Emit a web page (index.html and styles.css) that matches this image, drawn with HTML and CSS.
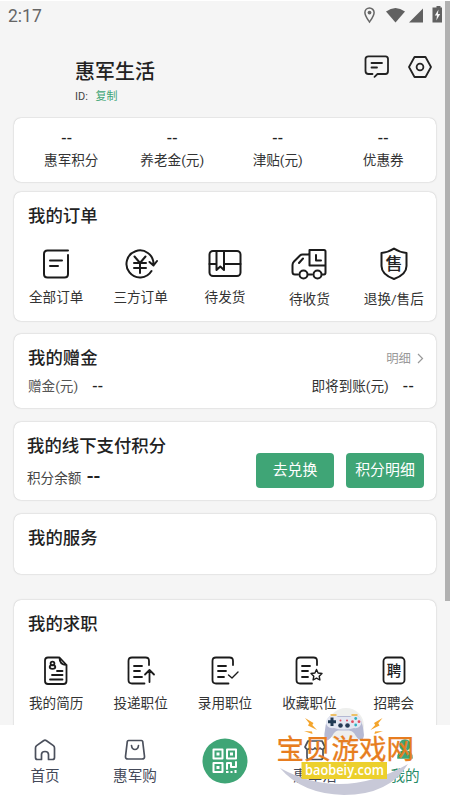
FILE: index.html
```html
<!DOCTYPE html>
<html lang="zh-CN">
<head>
<meta charset="utf-8">
<title>惠军生活</title>
<link rel="stylesheet" href="styles.css">
</head>
<body>
<div class="app">
  <header class="status">
    <span class="time">2:17</span>
    <svg class="status-icons" width="82" height="20" viewBox="0 0 82 20">
      <path d="M5.5 17C3 13.5.9 11 .9 7.6a4.6 4.6 0 0 1 9.200 0C10.100 11 8 13.500 5.500 17z" fill="none" stroke="#666" stroke-width="1.500"/>
      <circle cx="5.500" cy="7.600" r="1.900" fill="#666"/>
      <path d="M22 6.500Q31.500-.5 41 6.500L31.500 17.500z" fill="#616161"/>
      <path d="M59 3.500V17.500H45z" fill="#616161"/>
      <path d="M71 2.500h1.500v-1.500h4v1.500H78v15H68.500v-15z" fill="#616161"/>
      <path d="M74.500 4.500l-3.700 6h2.200l-.7 5 3.900-6.500h-2.300z" fill="#f5f5f5"/>
    </svg>
  </header>

  <section class="profile">
    <div>
      <h1>惠军生活</h1>
      <p class="uid">ID: <a>复制</a></p>
    </div>
    <div class="tools">
      <svg width="26" height="26" viewBox="0 0 26 26" fill="none" stroke="#222" stroke-width="1.800" stroke-linecap="round" stroke-linejoin="round"><path d="M8.500 20H4.500Q1.500 20 1.500 17V5Q1.500 2.300 4.500 2.300H21.500Q24 2.300 24 5V17Q24 20 21.500 20H13.500L10.500 22.800M7.500 9H18M7.500 13.500H13"/></svg>
      <svg width="26" height="26" viewBox="0 0 26 26" fill="none" stroke="#222" stroke-width="1.800" stroke-linejoin="round"><path d="M7.500 3H18.500L24 13L18.500 23H7.500L2 13z"/><circle cx="13" cy="13" r="3.400"/></svg>
    </div>
  </section>

  <main>
    <section class="card balances">
      <div class="stat first"><b>--</b><span>惠军积分</span></div>
      <div class="stat"><b>--</b><span>养老金(元)</span></div>
      <div class="stat"><b>--</b><span>津贴(元)</span></div>
      <div class="stat"><b>--</b><span>优惠券</span></div>
    </section>

    <section class="card orders">
      <h2>我的订单</h2>
      <div class="grid">
        <div class="item">
          <svg width="36" height="36" viewBox="0 0 36 36"><path d="M30 4.500H9.500Q6 4.500 6 8V28Q6 31.500 9.500 31.500H26.500Q30 31.500 30 28V9M12 14.500H24M12 20H20"/></svg>
          <span>全部订单</span>
        </div>
        <div class="item">
          <svg width="36" height="36" viewBox="0 0 36 36"><path d="M28.500 25A13.500 13.500 0 1 1 30.500 18M26.500 16L30.500 19.500L34 15M11.500 10.500L17 17L22.500 10.500M11 17H23M11 22H23M17 17V27"/></svg>
          <span>三方订单</span>
        </div>
        <div class="item">
          <svg width="36" height="36" viewBox="0 0 36 36"><rect x="2.500" y="5" width="31" height="25" rx="3.500"/><path d="M2.500 18H9.500M17 18H33.500M9.500 5V24L13.300 20.500L17 24V5"/></svg>
          <span>待发货</span>
        </div>
        <div class="item low">
          <svg width="36" height="36" viewBox="0 0 36 36"><path d="M17.500 8.500H11.500Q10 8.500 9 9.500L3 15.500Q1.500 17 1.500 19V26Q1.500 28.500 4 28.500H7M17.500 28.500H21M31 28.500H33Q34.500 28.500 34.500 26.500V5.500Q34.500 4 33 4H18.500V19.500H34.500M8 17L12 12.500M25 9V14.500H30"/><circle cx="12.500" cy="28.500" r="4"/><circle cx="26.500" cy="28.500" r="4"/></svg>
          <span>待收货</span>
        </div>
        <div class="item low">
          <svg width="36" height="36" viewBox="0 0 36 36"><path d="M18 2.500Q23 6 30.500 7V20Q30.500 28.500 18 33Q5.500 28.500 5.500 20V7Q13 6 18 2.500z"/><text x="18" y="24" font-size="17">售</text></svg>
          <span>退换/售后</span>
        </div>
      </div>
    </section>

    <section class="card bonus">
      <div class="row"><h2>我的赠金</h2><span class="more">明细 <svg width="7" height="11" viewBox="0 0 7 11"><path d="M1 1L5.500 5.500L1 10" fill="none" stroke="#999" stroke-width="1.200"/></svg></span></div>
      <div class="row detail"><span class="pale">赠金(元)<b>--</b></span><span class="due">即将到账(元)<b>--</b></span></div>
    </section>

    <section class="card offline">
      <div class="info"><h2>我的线下支付积分</h2><p>积分余额 <b>--</b></p></div>
      <div class="actions"><button>去兑换</button><button>积分明细</button></div>
    </section>

    <section class="card services"><h2>我的服务</h2></section>

    <section class="card jobs">
      <h2>我的求职</h2>
      <div class="grid">
        <div class="item">
          <svg width="36" height="36" viewBox="0 0 36 36"><path d="M20.500 4.500H10Q7 4.500 7 7.500V28Q7 31 10 31H25.500Q28.500 31 28.500 28V12L21.500 4.500Q21.500 12 28.500 12M19 18H24.500M14 22H24.500M12 26.500H24.500"/><circle cx="14.500" cy="10.500" r="1.900"/><ellipse cx="14.500" cy="14" rx="2.800" ry="1.800"/></svg>
          <span>我的简历</span>
        </div>
        <div class="item">
          <svg width="36" height="36" viewBox="0 0 36 36"><path d="M26 12V8Q26 4.500 22.500 4.500H9Q5.500 4.500 5.500 8V27Q5.500 30.500 9 30.500H21.500M11 13H19M11 18H17M11 24H19M26.500 29V17.500M22 21.500L26.500 17L31 21.500"/></svg>
          <span>投递职位</span>
        </div>
        <div class="item">
          <svg width="36" height="36" viewBox="0 0 36 36"><path d="M26 12V8Q26 4.500 22.500 4.500H9Q5.500 4.500 5.500 8V27Q5.500 30.500 9 30.500H21.500M11 13H19M11 18H19M11 24H17"/><path class="thin" d="M21.500 22L25 25L31 19"/></svg>
          <span>录用职位</span>
        </div>
        <div class="item">
          <svg width="36" height="36" viewBox="0 0 36 36"><path d="M26 12V8Q26 4.500 22.500 4.500H9Q5.500 4.500 5.500 8V27Q5.500 30.500 9 30.500H21M11 13H19M11 18H17M11 24H17"/><path class="thin" d="M25.500 16.500L27.100 20L31 20.500L28.200 23.200L28.900 27L25.500 25.200L22.100 27L22.800 23.200L20 20.500L23.900 20z"/></svg>
          <span>收藏职位</span>
        </div>
        <div class="item">
          <svg width="36" height="36" viewBox="0 0 36 36"><rect x="7.500" y="4.500" width="21" height="26" rx="3.500"/><text x="18" y="23" font-size="14.500">聘</text></svg>
          <span>招聘会</span>
        </div>
      </div>
    </section>
  </main>

  <nav>
    <div class="tab"><svg width="24" height="24" viewBox="0 0 24 24"><path d="M8.500 21.500H4.500Q2.500 21.500 2.500 19.500V10Q2.500 8.500 3.600 7.600L10.500 2.700Q12 1.700 13.500 2.700L20.400 7.600Q21.500 8.500 21.500 10V19.500Q21.500 21.500 19.500 21.500H15.500V16.500Q15.500 13.500 12 13.500Q8.500 13.500 8.500 16.500z"/></svg><span>首页</span></div>
    <div class="tab"><svg width="24" height="24" viewBox="0 0 24 24"><path d="M5.500 2.500H18.500Q19.500 2.500 19.700 3.500L21.500 18.500Q21.700 21 19 21H5Q2.300 21 2.500 18.500L4.300 3.500Q4.500 2.500 5.500 2.500M8.500 7.500Q9 11.500 12 11.500T15.500 7.500"/></svg><span>惠军购</span></div>
    <div class="tab scan">
      <svg width="46" height="46" viewBox="0 0 46 46"><circle cx="23" cy="23" r="22.500" fill="#3fa576"/><g fill="none" stroke="#fff" stroke-width="2"><rect x="11.500" y="11.500" width="9" height="9"/><rect x="25" y="11.500" width="9" height="9"/><rect x="11.500" y="25" width="9" height="9"/><path d="M25 31V25H29V29H34V24"/></g><path d="M14.500 14.500h3v3h-3zM28 14.500h3v3h-3zM14.500 28h3v3h-3zM24 33h2.500v2H24zM28.500 33h2v2h-2zM32.500 32h2v3h-2z" fill="#fff"/></svg>
    </div>
    <div class="tab"><svg width="24" height="24" viewBox="0 0 24 24"><path d="M4 11V19Q4 21.500 6.500 21.500H17.500Q20 21.500 20 19V11M5 3H19L22 9Q20 13 17 10Q14.500 13 12 10Q9.500 13 7 10Q4 13 2 9z"/></svg><span>惠军活</span></div>
    <div class="tab active"><svg width="24" height="24" viewBox="0 0 24 24"><circle cx="12" cy="7" r="5"/><path d="M5 20Q5 13 12 13T19 20z"/></svg><span>我的</span></div>
  </nav>

  <svg class="watermark" width="150" height="98" viewBox="270 702 150 98">
    <circle cx="346" cy="726" r="18" fill="#eeefed"/>
    <path d="M280 768Q342 802 408 764Q389 795 344 795Q302 794 280 768z" fill="#c8c9d8"/>
    <g fill="#f4a52d"><path d="M305 718l8.500 5-1.200 2 4.700 5-9-4.500 1.200-2.200zM304 731l8 .5.5 2.500zM382.500 718l-8.500 5 1.200 2-4.700 5 9-4.500-1.200-2.200zM383 731l-8 .5-.5 2.500z"/></g>
    <path d="M330 716H358Q362 719 363.500 731Q365 739 361 740.500Q358 740 354 733Q352 730.500 349 730.500H338Q336 730.500 334 733Q330 740 327 740.500Q323 739 325 730Q326 719 330 716z" fill="#b5b9d3"/>
    <path d="M332 715.500Q336 714.500 338 717H350Q353 714.500 356 715.500Q362 717 361.500 723Q360 729 354 728Q344 731 334 728Q327 729 326 723Q326 717 332 715.500z" fill="#e4e7f2"/>
    <path d="M330.500 715h6M351.500 715h6" stroke="#edb13b" stroke-width="1.500"/>
    <path d="M332 717.500V726M328 721.700H336" stroke="#203a54" stroke-width="3"/>
    <circle cx="340.500" cy="725.500" r="2.300" fill="#263a55"/><circle cx="347.500" cy="725.500" r="2.300" fill="#263a55"/>
    <g fill="#e34b5e"><circle cx="340.500" cy="720.500" r="1"/><circle cx="347" cy="720.500" r="1"/><circle cx="352.500" cy="721.700" r="1.400"/><circle cx="359" cy="721.700" r="1.400"/></g><g fill="#30afc0"><circle cx="355.700" cy="718.500" r="1.400"/><circle cx="355.700" cy="725" r="1.400"/></g>
    <text class="brand" x="276.500" y="758.500">宝贝游戏网</text>
    <rect x="301.500" y="762" width="85.500" height="17" fill="#ecd02d"/>
    <text class="domain" x="305" y="774.500" textLength="79" lengthAdjust="spacingAndGlyphs">baobeiy.com</text>
  </svg>
  <div class="scrollbar"></div>
</div>
</body>
</html>
```
FILE: styles.css
```css
* { box-sizing: border-box; }
body { margin: 0; font-family: Roboto, "Noto Sans CJK SC", sans-serif; color: #222; }
h1, h2, p { margin: 0; }
.app { position: relative; width: 450px; height: 800px; overflow: hidden; display: flex; flex-direction: column; background: #f5f5f5; border-top: 1px solid #fff; }
.status { height: 31px; flex: none; padding: 4px 4px 0 8px; display: flex; justify-content: space-between; }
.time { font-size: 17.5px; line-height: 22px; color: #666; }
.profile { height: 85px; flex: none; padding: 22px 17px 0 75px; display: flex; justify-content: space-between; }
h1 { font-size: 20px; line-height: 34px; font-weight: 500; margin-top: 1px; }
.uid { font-size: 11px; line-height: 14px; color: #444; margin-top: 1px; }
.uid a { color: #3fa576; margin-left: 5px; }
.tools { display: flex; gap: 17px; }
main { flex: 1; min-height: 0; overflow: hidden; padding: 0 14px; display: flex; flex-direction: column; }
.card { flex: none; background: #fff; border-radius: 7px; box-shadow: 0 0 1.5px rgba(0,0,0,.3); }
h2 { font-size: 17.4px; line-height: 26px; font-weight: 500; }
.balances { height: 64px; margin-top: 1px; display: grid; grid-template-columns: repeat(4, 1fr); padding-top: 9px; }
.stat { display: flex; flex-direction: column; align-items: center; font-size: 13.6px; line-height: 22px; color: #333; }
.stat b, .detail b { font-size: 15.5px; font-weight: 500; color: #222; letter-spacing: .3px; }
.stat.first span { padding-left: 9px; }
.orders { height: 129px; margin-top: 10px; padding-top: 11px; }
.orders h2, .jobs h2, .services h2 { padding-left: 14px; }
.grid { display: grid; grid-template-columns: repeat(5, 1fr); }
.item { display: flex; flex-direction: column; align-items: center; font-size: 13.6px; line-height: 20px; color: #333; }
.item svg { fill: none; stroke: #1b1b1b; stroke-width: 2; stroke-linecap: round; stroke-linejoin: round; }
.item svg text { fill: #222; stroke: none; text-anchor: middle; font-weight: 500; }
.orders .grid { margin-top: 17px; }
.orders .item span { margin-top: 5px; }
.orders .low span { margin-top: 7px; }
.bonus { height: 74px; margin-top: 13px; padding: 11px 12px 0 14px; }
.row { display: flex; justify-content: space-between; align-items: center; }
.more { font-size: 12.4px; color: #999; display: flex; align-items: center; gap: 6px; }
.detail { height: 22px; margin-top: 4px; padding-right: 10px; font-size: 13.6px; line-height: 22px; color: #333; }
.detail b { margin-left: 14px; }
.detail .pale { color: #555; }
.offline { height: 78px; margin-top: 14px; padding: 11px 12px 0 13px; display: flex; justify-content: space-between; }
.offline p { margin-top: 4px; font-size: 13.6px; line-height: 26px; color: #444; }
.offline p b { font-size: 20px; font-weight: 500; color: #222; margin-left: 2px; }
.actions { display: flex; gap: 12px; padding-top: 20px; }
button { width: 78px; height: 35px; border: 0; border-radius: 4px; padding: 0; background: #3fa576; color: #fff; font: 14.9px/35px Roboto, "Noto Sans CJK SC", sans-serif; }
.services { height: 60px; margin-top: 14px; padding-top: 11px; }
.jobs { height: 150px; margin-top: 26px; padding-top: 11px; }
.jobs .grid { margin-top: 16px; }
.jobs .item span { margin-top: 4px; }
.jobs .item svg { stroke-width: 1.8; }
.jobs .item svg .thin { stroke-width: 1.4; }
nav { height: 75px; flex: none; background: #fff; display: grid; grid-template-columns: repeat(5, 1fr); }
.tab { padding-top: 13px; display: flex; flex-direction: column; align-items: center; font-size: 14.6px; line-height: 20px; color: #444958; }
.tab > svg { fill: none; stroke: #4b505c; stroke-width: 1.7; stroke-linejoin: round; stroke-linecap: round; flex: none; }
.tab span { margin-top: 4px; }
.tab.scan > svg { stroke: none; }
.tab.active { color: #278b68; }
.tab.active > svg { fill: #3fa576; stroke: #3fa576; }
.watermark { position: absolute; left: 270px; top: 701px; }
.brand { font: 400 27.5px "Noto Sans CJK SC", sans-serif; fill: #e77d20; stroke: #e77d20; stroke-width: .3px; }
.domain { font: 600 14px "Open Sans", sans-serif; fill: #fff; }
.scrollbar { position: absolute; right: 0; top: -1px; width: 5px; height: 601px; background: #b1b1b1; }
```
